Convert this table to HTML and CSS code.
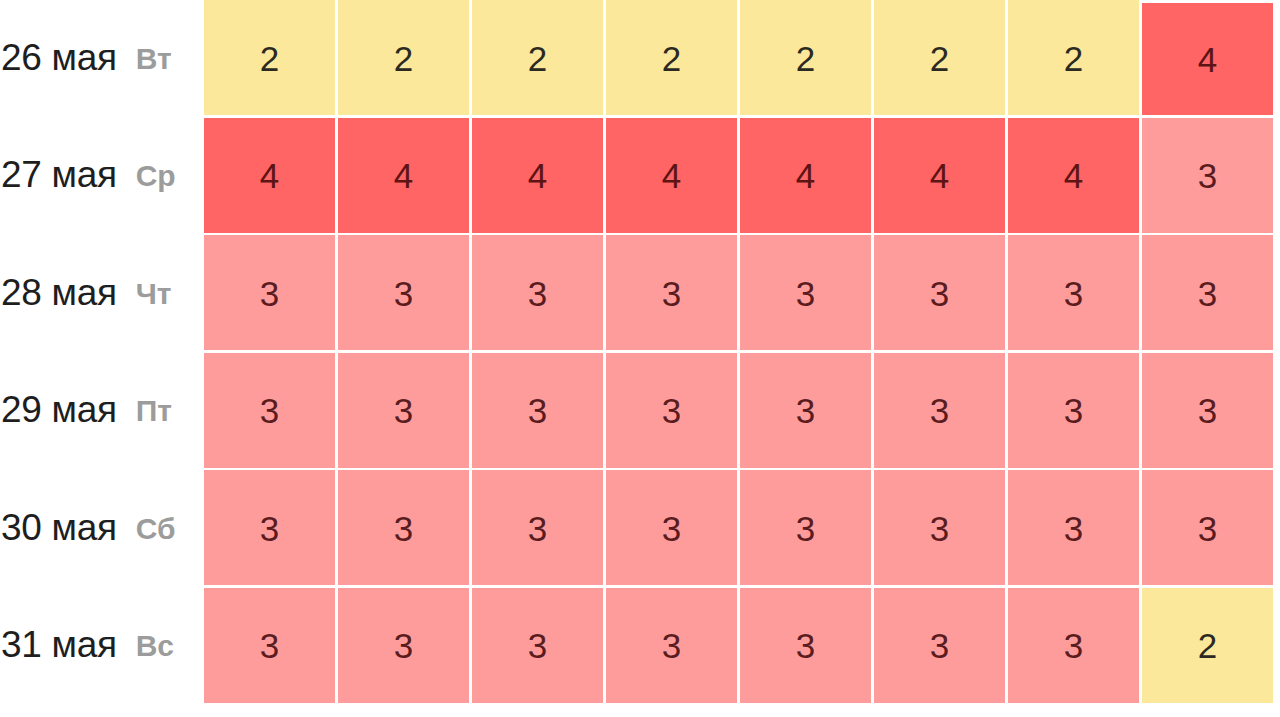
FILE: index.html
```html
<!DOCTYPE html>
<html lang="ru">
<head>
<meta charset="utf-8">
<title>Прогноз</title>
<link rel="stylesheet" href="styles.css">
</head>
<body>
<div class="table">
  <div class="label"><span class="date">26 мая</span><span class="dow">Вт</span></div>
  <div class="cell c2">2</div><div class="cell c2">2</div><div class="cell c2">2</div><div class="cell c2">2</div><div class="cell c2">2</div><div class="cell c2">2</div><div class="cell c2">2</div><div class="cell c4 last">4</div>

  <div class="label"><span class="date">27 мая</span><span class="dow">Ср</span></div>
  <div class="cell c4">4</div><div class="cell c4">4</div><div class="cell c4">4</div><div class="cell c4">4</div><div class="cell c4">4</div><div class="cell c4">4</div><div class="cell c4">4</div><div class="cell c3">3</div>

  <div class="label"><span class="date">28 мая</span><span class="dow">Чт</span></div>
  <div class="cell c3">3</div><div class="cell c3">3</div><div class="cell c3">3</div><div class="cell c3">3</div><div class="cell c3">3</div><div class="cell c3">3</div><div class="cell c3">3</div><div class="cell c3">3</div>

  <div class="label"><span class="date">29 мая</span><span class="dow">Пт</span></div>
  <div class="cell c3">3</div><div class="cell c3">3</div><div class="cell c3">3</div><div class="cell c3">3</div><div class="cell c3">3</div><div class="cell c3">3</div><div class="cell c3">3</div><div class="cell c3">3</div>

  <div class="label"><span class="date">30 мая</span><span class="dow">Сб</span></div>
  <div class="cell c3">3</div><div class="cell c3">3</div><div class="cell c3">3</div><div class="cell c3">3</div><div class="cell c3">3</div><div class="cell c3">3</div><div class="cell c3">3</div><div class="cell c3">3</div>

  <div class="label"><span class="date">31 мая</span><span class="dow">Вс</span></div>
  <div class="cell c3">3</div><div class="cell c3">3</div><div class="cell c3">3</div><div class="cell c3">3</div><div class="cell c3">3</div><div class="cell c3">3</div><div class="cell c3">3</div><div class="cell c2">2</div>
</div>
</body>
</html>
```
FILE: styles.css
```css
html, body {
  margin: 0;
  padding: 0;
  background: #ffffff;
}
body {
  font-family: "Liberation Sans", Arial, sans-serif;
  width: 1280px;
  height: 717px;
  overflow: hidden;
}
.table {
  display: grid;
  grid-template-columns: 201px repeat(8, 131px);
  grid-auto-rows: 115px;
  column-gap: 3px;
  row-gap: 2.5px;
  background: #ffffff;
}
.label {
  display: flex;
  align-items: center;
  gap: 19px;
  padding-left: 1px;
  white-space: nowrap;
}
.date {
  font-size: 37px;
  color: #1e1e1e;
  letter-spacing: -0.3px;
}
.dow {
  font-size: 30px;
  font-weight: bold;
  color: #9c9c9c;
  padding-top: 2px;
}
.cell {
  display: flex;
  align-items: center;
  justify-content: center;
  font-size: 35px;
  padding-top: 2px;
}
.c2 {
  background: #fce89b;
  color: #2b2a22;
}
.c3 {
  background: #fe9c9c;
  color: #5a1c1e;
}
.c4 {
  background: #fe6564;
  color: #5e1414;
}
.last {
  margin-top: 3px;
}
```
